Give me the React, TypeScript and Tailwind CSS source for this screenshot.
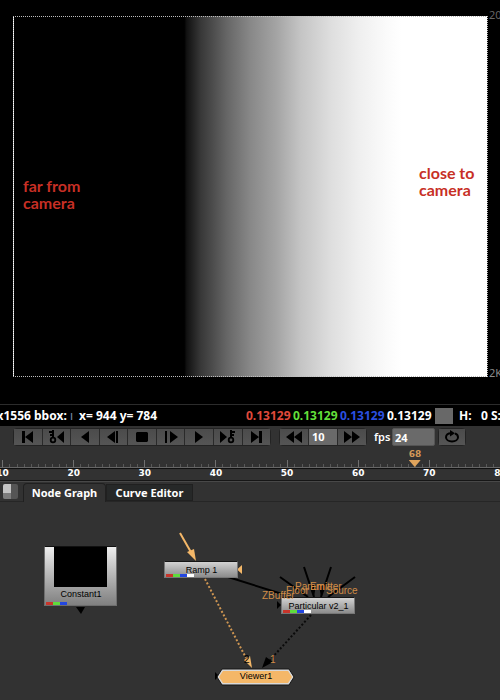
import type { ReactNode } from "react";

const PLAYBACK: { label: string; icon: ReactNode }[] = [
  { label: "First frame", icon: <path d="M3 2h3v12H3zM14 2v12L6 8z" /> },
  {
    label: "Previous keyframe",
    icon: (
      <>
        <path d="M17 2v12l-7-6z" />
        <path d="M5 1h2v8H5zM2 2h4v2H2zM3 5h3v2H3z" />
        <circle cx="6" cy="11" r="2.3" fill="none" stroke="currentColor" strokeWidth="1.8" />
      </>
    ),
  },
  { label: "Play backward", icon: <path d="M13 2v12L5 8z" /> },
  { label: "Step backward", icon: <path d="M11 2v12L3 8zM12 2h2v12h-2z" /> },
  { label: "Stop", icon: <path d="M4 3h10l1 1v8l-1 1H4l-1-1V4z" /> },
  { label: "Step forward", icon: <path d="M8 2v12l8-6zM3 2h2v12H3z" /> },
  { label: "Play forward", icon: <path d="M5 2v12l8-6z" /> },
  {
    label: "Next keyframe",
    icon: (
      <>
        <path d="M1 2v12l7-6z" />
        <path d="M11 1h2v8h-2zM12 2h4v2h-4zM12 5h3v2h-3z" />
        <circle cx="12" cy="11" r="2.3" fill="none" stroke="currentColor" strokeWidth="1.8" />
      </>
    ),
  },
  { label: "Last frame", icon: <path d="M4 2v12l8-6zM12 2h3v12h-3z" /> },
];

const FRAMES = ["10", "20", "30", "40", "50", "60", "70", "80"];
const TICKS = [0, 7, 14, 21, 28, 35, 42, 50, 57, 64];

function Icon({ children }: { children: ReactNode }) {
  return (
    <svg viewBox="0 0 18 16" className="h-[16px] w-[18px] shrink-0" fill="currentColor" aria-hidden="true">
      {children}
    </svg>
  );
}

function BarButton({ label, children, className }: { label: string; children: ReactNode; className: string }) {
  return (
    <button
      type="button"
      aria-label={label}
      className={`flex h-full items-center justify-center bg-linear-to-b from-[#4b4b4b] to-[#555555] text-black ${className}`}
    >
      {children}
    </button>
  );
}

function Channels({ alpha }: { alpha?: boolean }) {
  return (
    <div className="flex h-[3px]">
      <span className="w-[7px] bg-[#c8352b]" />
      <span className="w-[7px] bg-[#5fdc3c]" />
      <span className="w-[7px] bg-[#2347e0]" />
      {alpha && <span className="w-[7px] bg-white" />}
    </div>
  );
}

function Node({ name, className }: { name: string; className: string }) {
  return (
    <div
      className={`absolute grid h-[17px] w-[74px] border border-[#777777] border-t-[#151515] bg-linear-to-b from-[#d2d2d2] to-[#8c8c8c] pl-px ${className}`}
    >
      <div className="col-start-1 row-start-1 self-end">
        <Channels alpha />
      </div>
      <span className="col-start-1 row-start-1 self-center text-center text-[9px] leading-[14px]">{name}</span>
    </div>
  );
}

export default function App() {
  return (
    <main className="flex min-h-screen flex-col overflow-hidden bg-[#323232] font-['Noto_Sans',sans-serif] text-white">
      <section aria-label="Viewer" className="bg-black">
        <div className="flex h-[404px] pt-[16px] pl-[13px]">
          <div className="flex h-[361px] flex-1 justify-between border border-dotted border-[#bdbdbd] bg-[linear-gradient(to_right,#000_36%,#111_36.5%,#383838_39.5%,#4c4c4c_42%,#666_45%,#888_50%,#a4a4a4_55.5%,#c4c4c4_60.5%,#dedede_67%,#efefef_73%,#fbfbfb_79%,#fff_82%)] pr-2 pl-[9px] font-['Lato',sans-serif] text-[16px] leading-[17px] font-bold text-[#c72f25]">
            <p className="mt-[160px] w-[68px]">far from camera</p>
            <p className="mt-[147px] w-[60px]">close to camera</p>
          </div>
          <div className="-mt-1.5 flex h-[368px] w-[12px] flex-col justify-between overflow-hidden pl-px text-[11px] leading-[10px] whitespace-nowrap text-[#8a8a8a]">
            <span className="text-[#666666]">2048</span>
            <span>2K</span>
          </div>
        </div>
        <div className="flex h-[22px] items-center overflow-hidden border-t border-[#2c2c2c] text-[12px] font-bold whitespace-nowrap">
          <span className="flex w-[73px] shrink-0 justify-end">8x1556 bbox:&nbsp;<span className="font-normal text-[#7c8fa8]">ı</span></span>
          <span className="ml-[6px] w-[167px] shrink-0">x= 944 y= 784</span>
          <span className="w-[47px] shrink-0 text-[#e04a3c]">0.13129</span>
          <span className="w-[47px] shrink-0 text-[#63df3a]">0.13129</span>
          <span className="w-[47px] shrink-0 text-[#2b50e0]">0.13129</span>
          <span className="w-[47px] shrink-0">0.13129</span>
          <span className="ml-px h-[16px] w-[18px] shrink-0 bg-[#686868]" />
          <span className="ml-[6px] shrink-0">H:&nbsp;&nbsp; 0 S:</span>
        </div>
      </section>

      <section aria-label="Playback" className="flex h-[22px] items-center pl-[13px] text-[11px] font-bold">
        <div className="flex h-[18px] w-[258px] gap-px rounded-sm border border-[#232323] bg-[#2a2a2a]">
          {PLAYBACK.map((b) => (
            <BarButton key={b.label} label={b.label} className="flex-1">
              <Icon>{b.icon}</Icon>
            </BarButton>
          ))}
        </div>
        <div className="ml-2 flex h-[18px] gap-px rounded-sm border border-[#232323] bg-[#2a2a2a]">
          <BarButton label="Skip backward" className="w-[28px]">
            <Icon><path d="M9 2v12L1 8zM17 2v12L9 8z" /></Icon>
          </BarButton>
          <input aria-label="Frame increment" defaultValue="10" className="w-[28px] bg-[#6a6a6a] pl-[3px] outline-none" />
          <BarButton label="Skip forward" className="w-[28px]">
            <Icon><path d="M1 2v12l8-6zM9 2v12l8-6z" /></Icon>
          </BarButton>
        </div>
        <label htmlFor="fps" className="ml-[7px] w-[18px] font-semibold">fps</label>
        <input id="fps" defaultValue="24" className="h-[18px] w-[43px] rounded-xs border border-[#555555] bg-[#6a6a6a] pl-[2px] leading-[16px] outline-none" />
        <div className="ml-[3px] h-[18px] rounded-sm border border-[#232323]">
          <BarButton label="Loop" className="w-[26px]">
            <svg viewBox="0 0 16 14" className="h-[14px] w-[16px]" fill="none" stroke="currentColor" strokeWidth="2" aria-hidden="true">
              <path d="M7 3.200C4 3.200 2 5 2 7.300S4.500 11.500 8 11.500s6-1.900 6-4.200c0-1.800-1.200-3.200-3-3.800" />
              <path d="M6 0l5 3.200-5 3.300z" fill="currentColor" stroke="none" />
            </svg>
          </BarButton>
        </div>
      </section>

      <section aria-label="Timeline" className="relative h-[33px] border-b border-[#161616] pt-[12px] font-['DejaVu_Sans',sans-serif]">
        <div className="-mr-[36px] -ml-[33px] flex">
          {FRAMES.map((frame) => (
            <div key={frame} className="flex flex-1 flex-col items-center">
              <svg viewBox="0 0 71 7" preserveAspectRatio="none" className="h-[7px] w-full" shapeRendering="crispEdges" aria-hidden="true">
                {TICKS.map((x) => (
                  <rect key={x} x={x} y={x === 35 ? 0 : 4} width="1" height="7" fill={x === 35 ? "#707070" : "#585858"} />
                ))}
              </svg>
              <span className="h-[2px] w-full border-y border-t-[#666666] border-b-[#101010]" />
              <span className="text-[9px] leading-[9px] font-bold">{frame}</span>
            </div>
          ))}
        </div>
        <div className="absolute top-0 left-[83%] flex -translate-x-1/2 flex-col items-center text-[9px] leading-[12px] text-[#d09858]">
          <span className="font-bold">68</span>
          <svg viewBox="0 0 12 8" className="h-[8px] w-[12px]" aria-hidden="true">
            <path d="M0 0h12L6 7z" fill="#e0a45c" />
          </svg>
        </div>
      </section>

      <nav aria-label="Panels" className="flex h-[21px] items-end border-t border-b border-t-[#484848] border-b-[#262626] text-[11px] font-bold">
        <span className="ml-[3px] grid h-[15px] w-[15px] grid-cols-2 self-center overflow-hidden rounded-xs bg-[#555555]">
          <span className="bg-linear-to-b from-[#c4c4c4] from-60% to-[#7d7d7d] to-60%" />
        </span>
        <button type="button" className="-mb-px ml-[5px] h-[19px] w-[83px] rounded-t-sm border border-b-0 border-[#202020] bg-[#323232]">Node Graph</button>
        <button type="button" className="h-[17px] w-[87px] border border-[#202020] bg-[#262828]">Curve Editor</button>
      </nav>

      <section aria-label="Node graph" className="relative h-[198px] grow font-['Liberation_Sans',sans-serif] text-black">
        <svg className="absolute top-0 left-0 h-[198px] w-[500px]" viewBox="0 502 500 198" aria-hidden="true">
          <g stroke="#000" strokeWidth="2">
            <path d="M228 577L282 594M280 577L308 597M304 567L314 597M331 567L321 597M355 577L328 597" />
          </g>
          <path d="M310 585l4 12 2-12zM325 586l-4 11-2-12z" />
          <path d="M180 533L192 554" stroke="#f4b768" strokeWidth="2" />
          <path d="M196 561l-9-9 7-3z" fill="#f4b768" />
          <path d="M205 579L246 658" stroke="#cf9652" strokeWidth="2" strokeDasharray="2 2" />
          <path d="M252 668l-8-8 6-4z" fill="#f4b768" />
          <path d="M311 615L270 660" stroke="#0a0a0a" strokeWidth="2" strokeDasharray="2 2" />
          <path d="M262 668l4-11 7 5z" />
          <path d="M242 565v9l-5-4.500z" fill="#f4b768" />
          <path d="M76 607h9l-4 7z" />
          <path d="M277 601v8l4-4zM215 672v8l4-4z" />
          <path d="M222 669h67l5 8-5 8h-67l-5-8z" fill="#d8d8d8" stroke="#151515" strokeWidth="1" />
          <path d="M223 671h65l4 6-4 6h-65l-4-6z" fill="#f4b768" />
        </svg>

        <div className="absolute top-[44px] left-[44px] flex h-[60px] w-[73px] flex-col border border-[#6e6e6e] border-t-[#111111] bg-linear-to-b from-[#eeeeee] to-[#808080] pl-px">
          <span className="mr-px h-[40px] w-[53px] self-center bg-black" />
          <span className="grow text-center text-[9px] leading-[15px]">Constant1</span>
          <Channels />
        </div>
        <Node name="Ramp 1" className="top-[59px] left-[164px]" />
        <Node name="Particular v2_1" className="top-[95px] left-[281px]" />
        <span className="absolute top-[168px] left-[217px] w-[78px] text-center text-[9px] leading-[13px]">Viewer1</span>

        <div className="text-[10px] leading-[10px] text-[#d08c46]">
          <span className="absolute top-[89px] left-[262px]">ZBuffer</span>
          <span className="absolute top-[84px] left-[286px]">Floor</span>
          <span className="absolute top-[80px] left-[295px]">Param</span>
          <span className="absolute top-[80px] left-[310px]">Emitter</span>
          <span className="absolute top-[84px] left-[326px]">Source</span>
          <span className="absolute top-[153px] left-[270px]">1</span>
          <span className="absolute top-[153px] left-[244px] text-black">2</span>
        </div>
      </section>
    </main>
  );
}
